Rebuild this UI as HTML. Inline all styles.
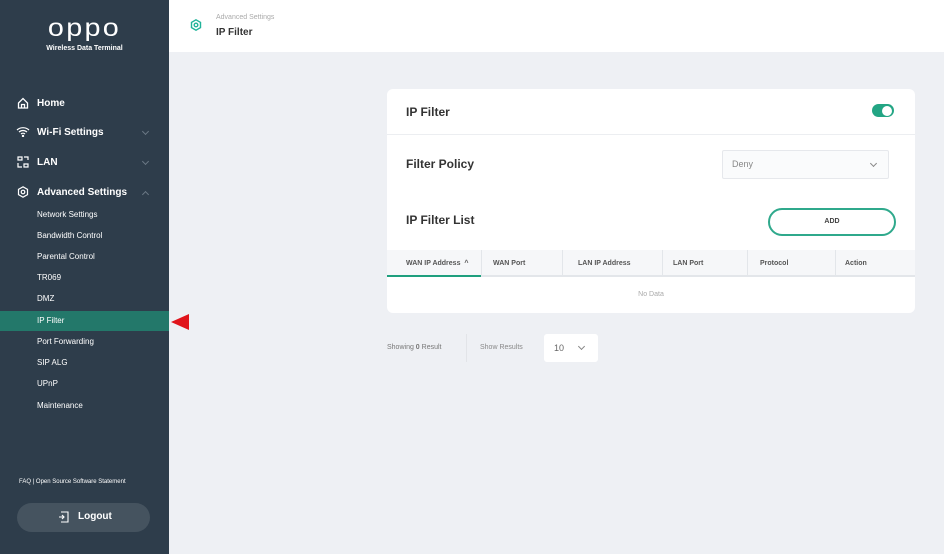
<!DOCTYPE html>
<html><head><meta charset="utf-8"><style>
*{margin:0;padding:0;box-sizing:border-box}
body{width:944px;height:554px;overflow:hidden;font-family:"Liberation Sans",sans-serif;background:#eef0f4;position:relative}
.sb{position:absolute;left:0;top:0;width:169px;height:554px;background:#2e3d4b;color:#fff}
.a{position:absolute;white-space:nowrap}
.nav{font-size:10px;font-weight:bold}
.sub{font-size:8px;left:37px}
.hdr{position:absolute;left:169px;top:0;right:0;height:52px;background:#fff}
.card{position:absolute;left:387px;top:89px;width:528px;height:224px;background:#fff;border-radius:6px}
.th{position:absolute;font-size:7px;font-weight:bold;color:#555}
.chev{position:absolute;width:5px;height:5px;border-right:1px solid #888;border-bottom:1px solid #888;transform:rotate(45deg)}
</style></head><body>
<div class="sb">
 <div class="a" style="left:0;width:169px;text-align:center;top:14px;font-size:25px;letter-spacing:2px;transform:scaleX(1.15)">oppo</div>
 <div class="a" style="left:0;width:169px;text-align:center;top:45px;font-size:7px;font-weight:bold">Wireless Data Terminal</div>
 <svg class="a" style="left:17px;top:97px" width="12" height="12" viewBox="0 0 12 12" fill="none" stroke="#fff" stroke-width="1.3"><path d="M1.5 6L6 1.5 10.5 6V11H1.5z M4.5 11V7.5h3V11"/></svg>
 <div class="a nav" style="left:37px;top:98px">Home</div>
 <svg class="a" style="left:16px;top:126px" width="14" height="11" viewBox="0 0 14 11" fill="none" stroke="#fff" stroke-width="1.2"><path d="M1 4a9 9 0 0 1 12 0M3 6a6 6 0 0 1 8 0M5 8a3 3 0 0 1 4 0"/><circle cx="7" cy="10" r=".6" fill="#fff"/></svg>
 <div class="a nav" style="left:37px;top:127px">Wi-Fi Settings</div>
 <span class="chev" style="left:143px;top:129px;border-color:#6a7885"></span>
 <svg class="a" style="left:17px;top:156px" width="12" height="12" viewBox="0 0 12 12" fill="none" stroke="#fff" stroke-width="1.2"><path d="M1 4V1h4v3H1zM7 1h4v3M1 7v4h4M7 8h4v3H7z"/></svg>
 <div class="a nav" style="left:37px;top:157px">LAN</div>
 <span class="chev" style="left:143px;top:159px;border-color:#6a7885"></span>
 <svg class="a" style="left:17px;top:186px" width="12" height="12" viewBox="0 0 12 12" fill="none" stroke="#fff" stroke-width="1.2"><path d="M6 .8l4.5 2.6v5.2L6 11.2 1.5 8.6V3.4z"/><circle cx="6" cy="6" r="1.8"/></svg>
 <div class="a nav" style="left:37px;top:187px">Advanced Settings</div>
 <span class="chev" style="left:143px;top:192px;border-color:#6a7885;transform:rotate(225deg)"></span>
 <div class="a sub" style="top:210px">Network Settings</div>
 <div class="a sub" style="top:231px">Bandwidth Control</div>
 <div class="a sub" style="top:252px">Parental Control</div>
 <div class="a sub" style="top:273px">TR069</div>
 <div class="a sub" style="top:294px">DMZ</div>
 <div class="a" style="left:0;top:311px;width:169px;height:20px;background:#23786a"></div>
 <div class="a sub" style="top:316px">IP Filter</div>
 <div class="a sub" style="top:337px">Port Forwarding</div>
 <div class="a sub" style="top:358px">SIP ALG</div>
 <div class="a sub" style="top:379px">UPnP</div>
 <div class="a sub" style="top:401px">Maintenance</div>
 <div class="a" style="left:19px;top:479px;font-size:6px">FAQ | Open Source Software Statement</div>
 <div class="a" style="left:17px;top:503px;width:133px;height:29px;border-radius:15px;background:#45535f"></div>
 <svg class="a" style="left:58px;top:511px" width="11" height="12" viewBox="0 0 11 12" fill="none" stroke="#fff" stroke-width="1.1"><path d="M3 1h7v10H3M1 6h5M4 4l2 2-2 2"/></svg>
 <div class="a" style="left:78px;top:511px;font-size:10px;font-weight:bold">Logout</div>
</div>
<svg class="a" style="left:170px;top:310px" width="20" height="24"><path d="M1 12L19 4v16z" fill="#e0141b"/></svg>
<div class="hdr">
 <svg class="a" style="left:21px;top:19px" width="12" height="12" viewBox="0 0 12 12" fill="none" stroke="#21b39a" stroke-width="1.4"><path d="M6 .8l4.5 2.6v5.2L6 11.2 1.5 8.6V3.4z"/><circle cx="6" cy="6" r="1.8"/></svg>
 <div class="a" style="left:47px;top:14px;font-size:7px;color:#aaa">Advanced Settings</div>
 <div class="a" style="left:47px;top:27px;font-size:10px;font-weight:bold;color:#333">IP Filter</div>
</div>
<div class="card">
 <div class="a" style="left:19px;top:16px;font-size:12px;font-weight:bold;color:#333">IP Filter</div>
 <div class="a" style="left:485px;top:15px;width:22px;height:13px;border-radius:7px;background:#23a584"></div>
 <div class="a" style="left:495px;top:17px;width:10px;height:10px;border-radius:5px;background:#fff"></div>
 <div class="a" style="left:0;top:45px;width:528px;height:1px;background:#eceef1"></div>
 <div class="a" style="left:19px;top:68px;font-size:12px;font-weight:bold;color:#333">Filter Policy</div>
 <div class="a" style="left:335px;top:61px;width:167px;height:29px;border:1px solid #e6e8ec;background:#fafbfc;border-radius:2px"></div>
 <div class="a" style="left:345px;top:70px;font-size:9px;color:#888">Deny</div>
 <span class="chev" style="left:484px;top:72px"></span>
 <div class="a" style="left:19px;top:124px;font-size:12px;font-weight:bold;color:#333">IP Filter List</div>
 <div class="a" style="left:381px;top:119px;width:128px;height:28px;border:2px solid #2fa98c;border-radius:14px;text-align:center;line-height:24px;font-size:7px;font-weight:bold;color:#444">ADD</div>
 <div class="a" style="left:0;top:161px;width:528px;height:27px;background:#f6f7f9;border-bottom:2px solid #e3e6ea"></div>
 <div class="a" style="left:0;top:186px;width:94px;height:2px;background:#1f9f7e"></div>
 <div class="th" style="left:19px;top:171px">WAN IP Address &nbsp;^</div>
 <div class="th" style="left:106px;top:171px">WAN Port</div>
 <div class="th" style="left:191px;top:171px">LAN IP Address</div>
 <div class="th" style="left:286px;top:171px">LAN Port</div>
 <div class="th" style="left:373px;top:171px">Protocol</div>
 <div class="th" style="left:458px;top:171px">Action</div>
 <div class="a" style="left:94px;top:161px;width:1px;height:25px;background:#e3e6ea"></div>
 <div class="a" style="left:175px;top:161px;width:1px;height:25px;background:#e3e6ea"></div>
 <div class="a" style="left:275px;top:161px;width:1px;height:25px;background:#e3e6ea"></div>
 <div class="a" style="left:360px;top:161px;width:1px;height:25px;background:#e3e6ea"></div>
 <div class="a" style="left:448px;top:161px;width:1px;height:25px;background:#e3e6ea"></div>
 <div class="a" style="left:0;width:528px;text-align:center;top:202px;font-size:7px;color:#aaa">No Data</div>
</div>
<div class="a" style="left:387px;top:344px;font-size:7px;color:#777">Showing <b>0</b> Result</div>
<div class="a" style="left:466px;top:334px;width:1px;height:28px;background:#e2e4e8"></div>
<div class="a" style="left:480px;top:344px;font-size:7px;color:#888">Show Results</div>
<div class="a" style="left:544px;top:334px;width:54px;height:28px;background:#fff;border-radius:3px"></div>
<div class="a" style="left:554px;top:343px;font-size:9px;color:#666">10</div>
<span class="chev" style="left:579px;top:344px"></span>
</body></html>
